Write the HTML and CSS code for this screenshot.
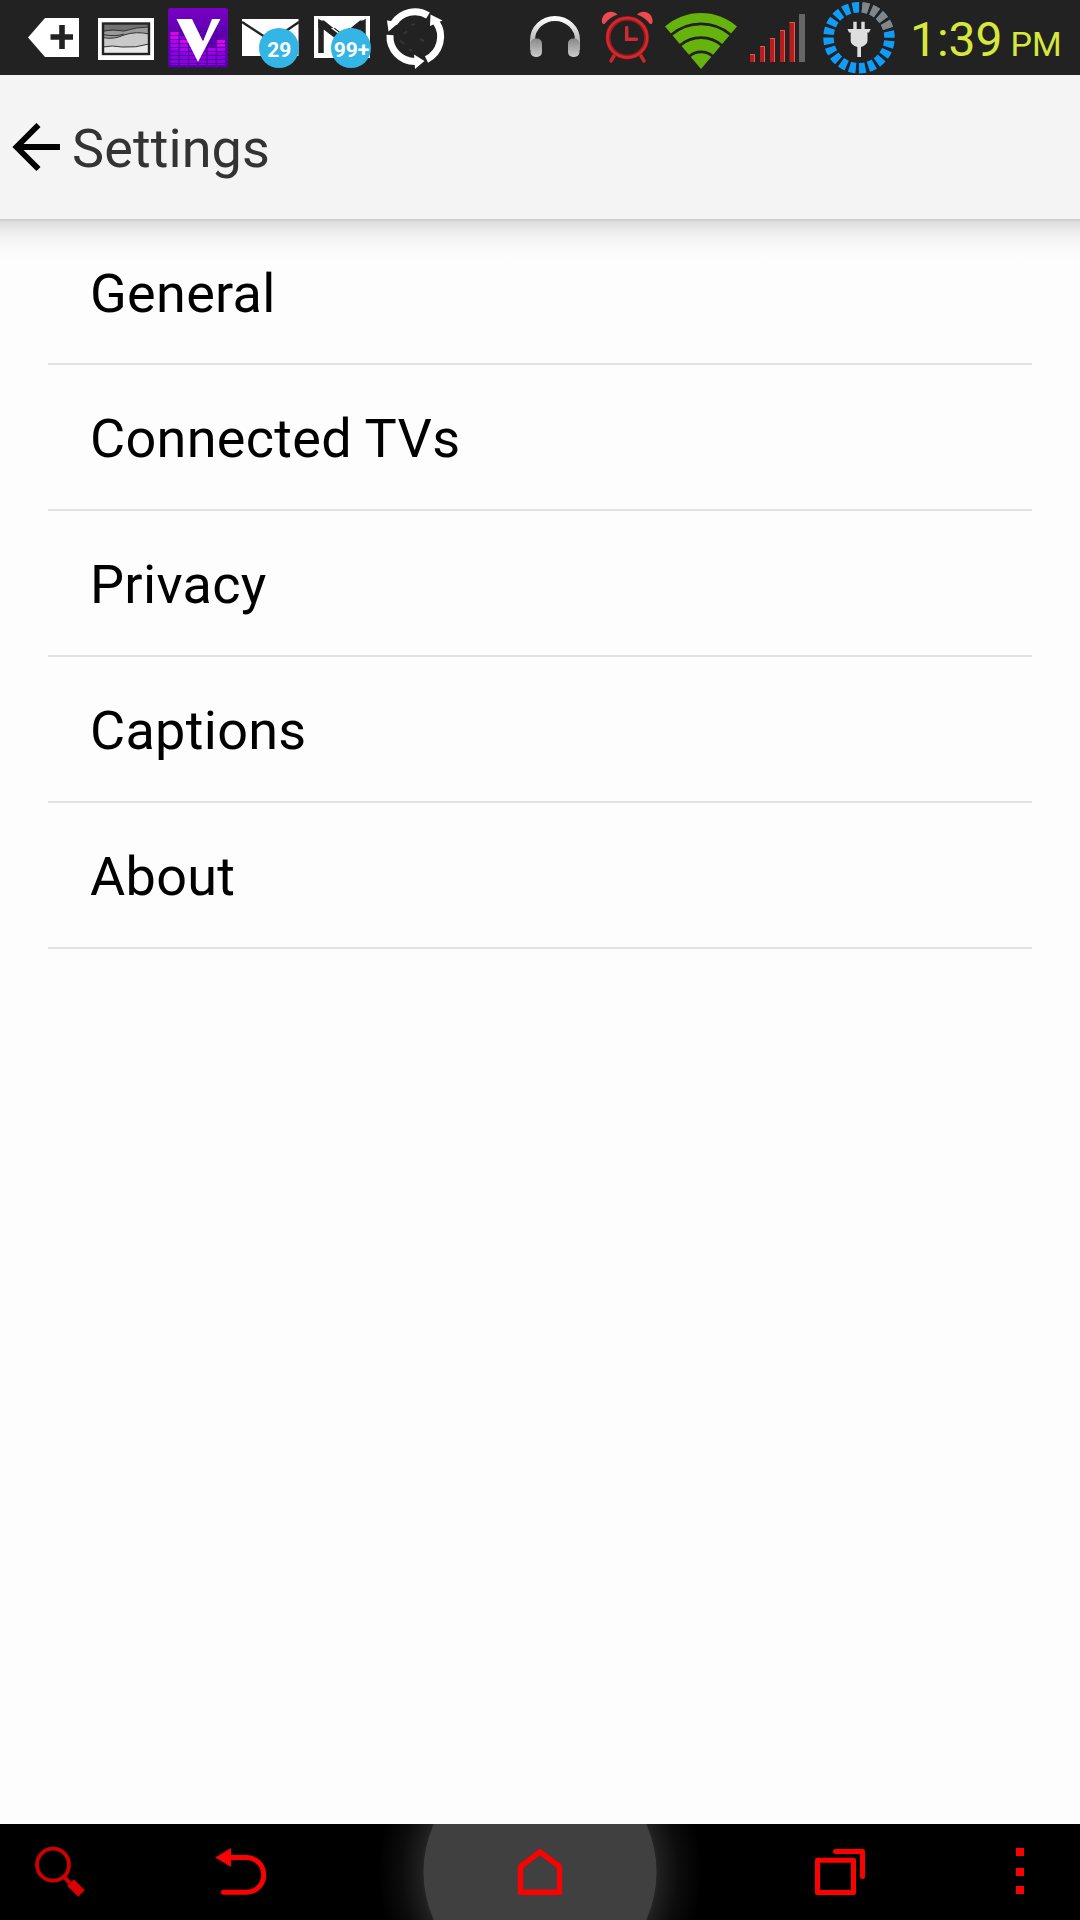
FILE: index.html
```html
<!DOCTYPE html>
<html lang="en">
<head>
    <meta charset="UTF-8">
    <meta name="viewport" content="width=device-width, initial-scale=1.0">
    <title>Settings</title>
    <link rel="stylesheet" href="styles.css">
</head>
<body>

    <div class="screen">
        <!-- Status bar -->
        <div class="status-bar">
            <div class="notifications">
                <svg width="72" height="75" viewBox="18 0 72 75">
                    <path d="M28 37.5L45 18H79V57H45Z" fill="#fff"/>
                    <path d="M50.5 37H73M62 25V49" stroke="#222" stroke-width="5.6"/>
                </svg>
                <svg width="72" height="75" viewBox="90 0 72 75">
                    <rect x="98" y="18" width="56" height="42" fill="#fff"/>
                    <rect x="103" y="23.5" width="46" height="30.5" fill="#727272"/>
                    <path d="M103 32Q112 29 124 31Q136 27 149 27V54H103Z" fill="#999"/>
                    <path d="M103 37Q113 40 124 35Q136 31 149 34V54H103Z" fill="#c9c9c9"/>
                    <path d="M103 47Q112 45 122 47Q136 48 149 44V54H103Z" fill="#e8e8e8"/>
                    <path d="M103 31Q112 29 124 31Q136 27 149 27M103 34.5Q115 37 124 34M103 37.5Q113 40 124 35Q136 31 149 34M103 47Q112 45 122 47Q136 48 149 44" fill="none" stroke="#333" stroke-width="1"/>
                    <rect x="103" y="23.5" width="46" height="30.5" fill="none" stroke="#222" stroke-width="2.4"/>
                </svg>
                <svg width="72" height="75" viewBox="162 0 72 75">
                    <defs>
                        <linearGradient id="purple" x1="0" y1="0" x2="0" y2="1">
                            <stop offset="0" stop-color="#7a00c4"/>
                            <stop offset="0.35" stop-color="#6200b4"/>
                            <stop offset="1" stop-color="#5a00a8"/>
                        </linearGradient>
                    </defs>
                    <rect x="168" y="8" width="60" height="59.5" rx="2.5" fill="url(#purple)"/>
                    <g fill="#8d00e0">
                        <rect x="170.5" y="31" width="8.2" height="34"/>
                        <rect x="179.8" y="36" width="8.2" height="29"/>
                        <rect x="189" y="45" width="8.2" height="20"/>
                        <rect x="198.3" y="40" width="8.2" height="25"/>
                        <rect x="207.5" y="48" width="8.2" height="17"/>
                        <rect x="216.8" y="39" width="8.2" height="26"/>
                    </g>
                    <g fill="#e000f0">
                        <rect x="170.5" y="32" width="8.2" height="7"/>
                        <rect x="179.8" y="40" width="8.2" height="3"/>
                        <rect x="198.3" y="40" width="8.2" height="4"/>
                        <rect x="216.8" y="40" width="8.2" height="6"/>
                    </g>
                    <g fill="#b400ee">
                        <rect x="170.5" y="39" width="8.2" height="10"/>
                        <rect x="179.8" y="43" width="8.2" height="8"/>
                        <rect x="216.8" y="46" width="8.2" height="6"/>
                        <rect x="207.5" y="48" width="8.2" height="5"/>
                    </g>
                    <path d="M170 31.5H226M170 35.5H226M170 39.5H226M170 43.5H226M170 47.5H226M170 51.5H226M170 55.5H226M170 59.5H226M170 63.5H226M179.3 29V65M188.5 29V65M197.8 29V65M207 29V65M216.3 29V65" stroke="#5200a0" stroke-width="1"/>
                    <path d="M176.5 19H192L203 41.5L212 19H220.5L198 62Z" fill="#fff"/>
                </svg>
                <svg width="72" height="75" viewBox="234 0 72 75">
                    <rect x="242" y="19" width="56.5" height="37" fill="#fff"/>
                    <path d="M242 22L265 37Q271 40 277 37L299 22" fill="none" stroke="#222" stroke-width="2.4"/>
                    <circle cx="279" cy="48" r="20" fill="#33b5e5"/>
                    <text class="badge" x="279.3" y="57">29</text>
                </svg>
                <svg width="72" height="75" viewBox="306 0 72 75">
                    <rect x="314" y="16" width="56" height="42" fill="#fff"/>
                    <path d="M321 53V24L342 40L363 24V53" fill="none" stroke="#222" stroke-width="5.5"/>
                    <path d="M318.3 20.5H324L342 35L360 20.5H364.5V28H318.3Z" fill="#222"/>
                    <path d="M325 20L342 33.5L359 20Z" fill="#fff"/>
                    <circle cx="351" cy="48" r="20" fill="#33b5e5"/>
                    <text class="badge" x="351.5" y="57">99+</text>
                </svg>
                <svg width="72" height="75" viewBox="378 0 72 75">
                    <g fill="none" stroke="#fff" stroke-width="7">
                        <path d="M428 15.5A25 25 0 0 0 394 23"/>
                        <path d="M390 35A25 25 0 0 0 416 61.500"/>
                        <path d="M426.5 59.5A25.500 25.500 0 0 0 436 22"/>
                    </g>
                    <path d="M387 20.5L399.5 22L388.5 31.5ZM414 54.5L424.500 61L415 69ZM430.500 14.500L442.500 20.500L430 26Z" fill="#fff"/>
                    <path d="M400 40Q402 43 405 44M404 34L407 31M411 25L415 24M420 39L424 41M409 50H412" stroke="#353535" stroke-width="2" fill="none"/>
                </svg>
            </div>

            <div class="system-icons">
                <svg width="72" height="75" viewBox="519 0 72 75">
                    <defs>
                        <linearGradient id="silver" x1="0" y1="0" x2="0" y2="1">
                            <stop offset="0" stop-color="#fff"/>
                            <stop offset="1" stop-color="#999"/>
                        </linearGradient>
                        <linearGradient id="cup" x1="0" y1="0" x2="0" y2="1">
                            <stop offset="0" stop-color="#888"/>
                            <stop offset="1" stop-color="#ccc"/>
                        </linearGradient>
                    </defs>
                    <path d="M532.5 50V40A22.5 21.5 0 0 1 577.5 40V50" fill="none" stroke="url(#silver)" stroke-width="5"/>
                    <rect x="530.5" y="38.5" width="11.5" height="18.5" rx="5" fill="url(#cup)"/>
                    <rect x="568" y="38.5" width="11.5" height="18.5" rx="5" fill="url(#cup)"/>
                </svg>
                <svg width="72" height="75" viewBox="591 0 72 75">
                    <path d="M614.5 55L611 61M640.5 55L644 61" stroke="#c62828" stroke-width="3.5" stroke-linecap="round"/>
                    <path d="M602 22.5C600.500 14 611 8 617.500 14.500Q610 17 605 23.500Q603 25 602 22.500Z" fill="#ee4a4f"/>
                    <path d="M652.500 22.500C654 14 643.500 8 637 14.500Q644.500 17 649.500 23.500Q651.500 25 652.500 22.500Z" fill="#ee4a4f"/>
                    <circle cx="627.3" cy="37.7" r="19.3" fill="none" stroke="#a91519" stroke-width="4.8"/>
                    <circle cx="627.3" cy="37.7" r="19.8" fill="none" stroke="#d02b31" stroke-width="2.5"/>
                    <path d="M626.7 27.5V39.3H636.5" fill="none" stroke="#d02b31" stroke-width="3.5" stroke-linecap="round"/>
                </svg>
                <svg width="76" height="75" viewBox="663 0 76 75">
                    <path d="M701 69L665 26.5A55 55 0 0 1 737 26.5Z" fill="#66b30d"/>
                    <g fill="none" stroke="#222" stroke-width="2.6">
                        <path d="M671 35A46 46 0 0 1 731 35"/>
                        <path d="M680 45.5A32 32 0 0 1 722 45.5"/>
                        <path d="M689 56.5A18 18 0 0 1 713 56.5"/>
                    </g>
                </svg>
                <svg width="76" height="75" viewBox="739 0 76 75">
                    <g fill="#b91c1c">
                        <rect x="750" y="54" width="5" height="8"/>
                        <rect x="760" y="46" width="5" height="16"/>
                        <rect x="770" y="38" width="5" height="24"/>
                        <rect x="780" y="30" width="5" height="32"/>
                        <rect x="789.5" y="22" width="5.5" height="40"/>
                    </g>
                    <path d="M750 54.5H754.5V62M760 46.5H764.5V62M770 38.5H774.5V62M780 30.5H784.5V62M789.5 22.5H794.5V62" fill="none" stroke="#e05a5a" stroke-width="1"/>
                    <rect x="799" y="14" width="6" height="48" fill="#666"/>
                </svg>
                <svg width="88" height="75" viewBox="815 0 88 75">
                    <g fill="none" stroke-width="10.5" transform="rotate(-84.1 859 37.7)">
                        <circle cx="859" cy="37.7" r="30.5" pathLength="20" stroke="#109dfa" stroke-dasharray="0.68 0.32"/>
                        <circle cx="859" cy="37.7" r="30.5" pathLength="20" stroke="#858585" stroke-dasharray="0.68 0.32 0.68 0.32 0.68 0.32 0.68 16.32"/>
                    </g>
                    <path d="M853.3 21.7H856.7V29H861.3V21.7H864.7V29H870.7L869 32.5H867.5V41Q867 45 861 47V57H857.3V47Q851 45 850.7 41V32.5H849L847.5 29H853.3Z" fill="#dedede"/>
                </svg>
                <div class="clock">1:39 <span class="meridiem">PM</span></div>
            </div>
        </div>

        <!-- App header -->
        <div class="header">
            <svg class="back-arrow" width="48" height="48" viewBox="0 0 48 48">
                <path d="M26.5 2L4.5 24L26.5 46M5 24H48" fill="none" stroke="#000" stroke-width="5.8"/>
            </svg>
            <h1>Settings</h1>
        </div>

        <!-- Settings list -->
        <div class="content">
            <ul class="settings-list">
                <li>General</li>
                <li>Connected TVs</li>
                <li>Privacy</li>
                <li>Captions</li>
                <li>About</li>
            </ul>
        </div>

        <!-- Navigation bar -->
        <div class="nav-bar">
            <svg width="120" height="96" viewBox="0 0 120 96">
                <circle cx="53" cy="40.7" r="16" fill="none" stroke="#d00000" stroke-width="3.8"/>
                <path d="M64 53L70 59" stroke="#d00000" stroke-width="4"/>
                <path d="M70.5 58.5L81.5 69.5" stroke="#d80000" stroke-width="9.5"/>
            </svg>
            <svg width="240" height="96" viewBox="120 0 240 96">
                <path d="M229 33.5H246.3A17.4 17.4 0 0 1 246.3 68.3H223.5" fill="none" stroke="#f00" stroke-width="5" stroke-linecap="round"/>
                <path d="M215.3 33.5L231 24V43Z" fill="#f00"/>
            </svg>
            <div class="home">
                <svg width="360" height="96" viewBox="360 0 360 96">
                    <circle cx="540" cy="48" r="116.5" fill="#404040"/>
                    <path d="M520.5 68.3V42.5L540 27.8L559.5 42.5V68.3Z" fill="none" stroke="#f00" stroke-width="5.4" stroke-linejoin="round"/>
                </svg>
            </div>
            <svg width="240" height="96" viewBox="720 0 240 96">
                <rect x="817.5" y="36.3" width="36" height="32.2" fill="none" stroke="#f00" stroke-width="5" stroke-linejoin="round"/>
                <path d="M835.5 27.5H862.5V52.5" fill="none" stroke="#f00" stroke-width="5" stroke-linecap="round" stroke-linejoin="round"/>
            </svg>
            <svg width="120" height="96" viewBox="960 0 120 96">
                <path d="M1016 24H1024V32H1016ZM1016 44H1024V52H1016ZM1016 62H1024V70H1016Z" fill="#f00"/>
            </svg>
        </div>
    </div>

</body>
</html>
```

FILE: styles.css
```css
body {
    font-family: Roboto, sans-serif;
    margin: 0;
    padding: 0;
    background-color: #fdfdfd;
}

svg {
    display: block;
    flex-shrink: 0;
}

.screen {
    width: 1080px;
    height: 1920px;
    display: flex;
    flex-direction: column;
    overflow: hidden;
}

.status-bar {
    height: 75px;
    background-color: #222;
    display: flex;
    justify-content: space-between;
    flex-shrink: 0;
}

.notifications {
    display: flex;
    padding-left: 18px;
}

.system-icons {
    display: flex;
    width: 561px;
}

.badge {
    font-size: 21px;
    font-weight: bold;
    fill: #fff;
    text-anchor: middle;
}

.clock {
    padding-left: 7px;
    color: #d6e83c; /* Lime clock text */
    font-size: 48px;
    line-height: 80px;
    white-space: nowrap;
}

.meridiem {
    margin-left: -4px;
    font-size: 34px;
}

.header {
    height: 144px;
    background-color: #f4f4f4;
    display: flex;
    align-items: center;
    flex-shrink: 0;
}

.back-arrow {
    margin-left: 12px;
}

h1 {
    margin: 3px 0 0 12px;
    font-size: 54px;
    font-weight: normal;
    letter-spacing: 0.1px;
    color: #333;
}

.content {
    flex: 1;
    border-top: 2px solid #d0d0d0;
    background: linear-gradient(#dcdcdc, #eee 12px, #f8f8f8 24px, #fdfdfd 38px);
}

.settings-list {
    list-style: none;
    margin: 0 48px;
    padding: 0;
}

.settings-list li {
    box-sizing: border-box;
    height: 146px;
    padding: 0 42px;
    border-bottom: 2px solid #e2e2e2;
    font-size: 54px;
    line-height: 148px;
    letter-spacing: 0.3px;
    color: #000;
}

.settings-list li:first-child {
    height: 144px;
    line-height: 146px;
}

.nav-bar {
    height: 96px;
    background-color: #000;
    display: flex;
    flex-shrink: 0;
}

/* Glow behind the pressed home button */
.home {
    background: radial-gradient(circle, #2a2a2a 114px, #1e1e1e 120px, #0d0d0d 138px, #000 162px);
}
```
